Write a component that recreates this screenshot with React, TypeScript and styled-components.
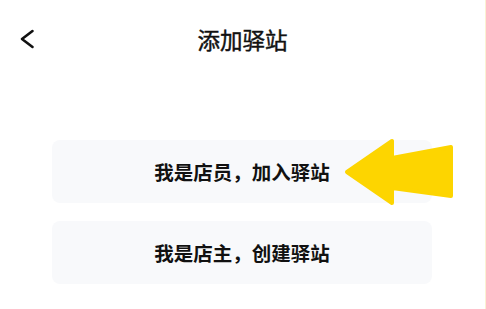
import React from "react";
import styled, { createGlobalStyle } from "styled-components";

const GlobalStyle = createGlobalStyle`
  html, body {
    margin: 0;
    padding: 0;
    background: #ffffff;
  }
  body {
    font-family: "Noto Sans CJK SC", "Noto Sans", sans-serif;
    color: #111111;
  }
`;

export default function App() {
  const options = ["我是店员，加入驿站", "我是店主，创建驿站"];

  return (
    <>
      <GlobalStyle />
      <Page>
        <Header>
          <BackButton aria-label="返回">
            <svg width="16" height="20" viewBox="0 0 16 20">
              <path
                d="M13.5 2 L3 10 L13.5 18"
                fill="none"
                stroke="#111"
                strokeWidth="2.6"
                strokeLinecap="round"
                strokeLinejoin="round"
              />
            </svg>
          </BackButton>
          <Title>添加驿站</Title>
        </Header>
        <OptionList>
          {options.map((label) => (
            <OptionCard key={label}>{label}</OptionCard>
          ))}
          <Pointer width="120" height="80" viewBox="0 0 120 80">
            <polygon
              points="7,38 52,7 52,24 111,13 111,62 52,54 52,69"
              fill="#fdd500"
              stroke="#fdd500"
              strokeWidth="4"
              strokeLinejoin="round"
            />
          </Pointer>
        </OptionList>
      </Page>
    </>
  );
}

const Page = styled.div`
  width: 486px;
  height: 309px;
  box-sizing: border-box;
  border-right: 1px solid #fbf2d2;
  overflow: hidden;
`;

const Header = styled.header`
  height: 78px;
  display: grid;
  grid-template-columns: 1fr auto 1fr;
  align-items: center;
`;

const BackButton = styled.button`
  justify-self: start;
  margin-left: 19px;
  padding: 0;
  border: none;
  background: none;
  display: flex;
  align-items: center;
  cursor: pointer;
`;

const Title = styled.h1`
  margin: 0;
  font-size: 22.5px;
  font-weight: 400;
  -webkit-text-stroke: 0.45px #111;
  line-height: 1;
  color: #111;
`;

const OptionList = styled.div`
  position: relative;
  margin: 62px 53px 0 52px;
  display: flex;
  flex-direction: column;
  gap: 18px;
`;

const OptionCard = styled.div`
  height: 63px;
  border-radius: 8px;
  background: #f8f9fb;
  display: flex;
  align-items: center;
  justify-content: center;
  font-size: 19.5px;
  font-weight: 700;
  color: #111;
`;

const Pointer = styled.svg`
  position: absolute;
  left: 288px;
  top: -6px;
`;
